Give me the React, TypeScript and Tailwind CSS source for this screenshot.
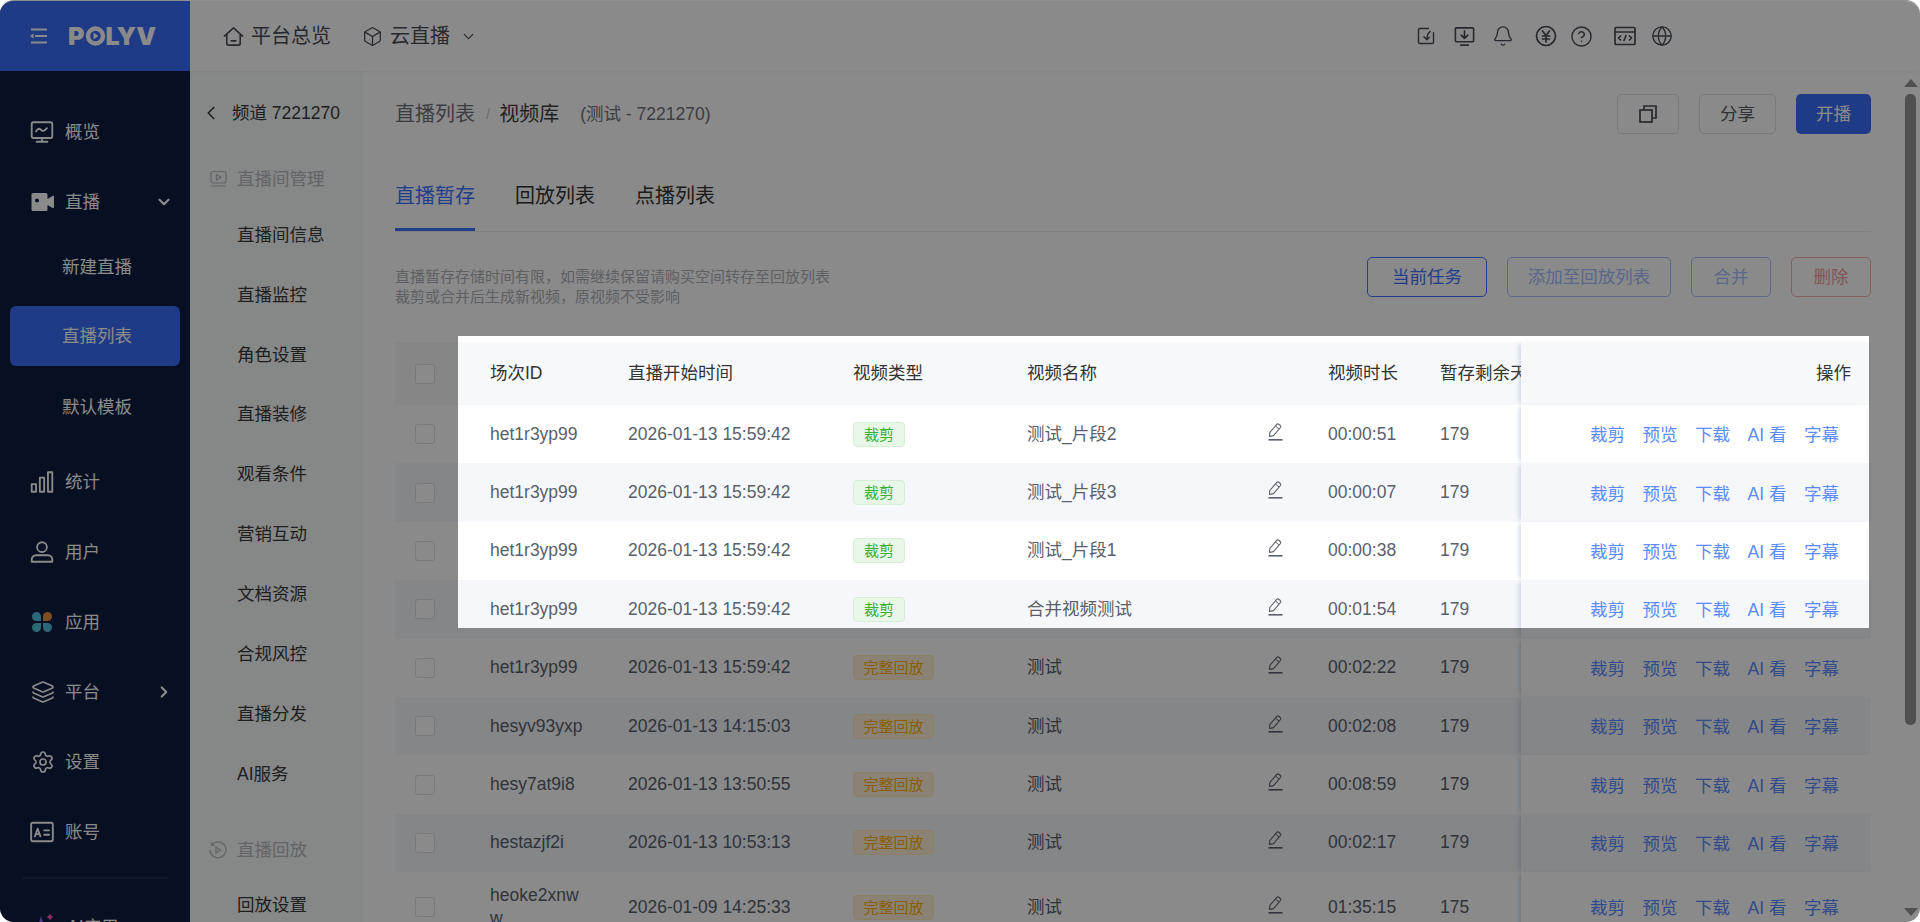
import React from "react";
import { Box, ChevronDown, ChevronLeft, ChevronRight, Bell, CircleHelp, Globe, Layers, Settings } from "lucide-react";

const I = ({ children, size = 22, className = "" }: { children: React.ReactNode; size?: number; className?: string }) => (
  <svg width={size} height={size} viewBox="0 0 24 24" fill="none" stroke="currentColor" strokeWidth="1.7" strokeLinecap="round" strokeLinejoin="round" className={className}>{children}</svg>
);

const Logo = () => (
  <div className="flex items-center text-white text-[25px] leading-none font-black tracking-[0.2px] [font-family:Inter,sans-serif]">
    <span>P</span>
    <svg width="21" height="20" viewBox="0 0 21 20"><circle cx="10.5" cy="10" r="7.5" fill="none" stroke="currentColor" strokeWidth="4.4" /><path d="M8.5 6.8 L13.6 10 L8.5 13.2Z" fill="currentColor" /></svg>
    <span>LYV</span>
  </div>
);

const iconsMain: Record<string, React.ReactNode> = {
  概览: <I size={26} className="-ml-[2px]"><rect x="2.5" y="3" width="19" height="14.5" rx="1.5" /><path d="M6.5 11.5c1.5-3 3-3 4.500-1.500s3 1.500 5.500-1.500M12 17.500v3.500M7 21h10" /></I>,
  直播: <svg width="24" height="22" viewBox="0 0 24 22"><path fillRule="evenodd" fill="currentColor" d="M2 2h13a1.500 1.500 0 0 1 1.500 1.500v4.500l5-3c.8-.4 1.500 0 1.500 1v10c0 1-.7 1.400-1.500 1l-5-3v4.500a1.500 1.500 0 0 1-1.500 1.500H2a1.500 1.500 0 0 1-1.500-1.500v-15A1.500 1.500 0 0 1 2 2Zm4 5.500a2 2 0 1 0 0 4 2 2 0 0 0 0-4Z" /></svg>,
  统计: <I size={26} className="-ml-[2px]"><rect x="2.500" y="14" width="4" height="7" /><rect x="10" y="8" width="4" height="13" /><rect x="17.500" y="3" width="4" height="18" /></I>,
  用户: <I size={26} className="-ml-[2px]"><circle cx="12" cy="7.500" r="4.500" /><path d="M2.500 21v-2a4 4 0 0 1 4-4h11a4 4 0 0 1 4 4v2Z" /></I>,
  应用: <svg width="22" height="22" viewBox="0 0 22 22"><path fill="#4fc3d8" d="M5.500 1A4.500 4.500 0 0 1 10 5.500V10H5.500a4.500 4.500 0 0 1 0-9ZM10 12v4.500A4.500 4.500 0 1 1 5.500 12ZM12 12h4.500a4.500 4.500 0 1 1-4.500 4.500Z" /><path fill="#e8923a" d="M12 10V5.500a4.500 4.500 0 1 1 4.500 4.500Z" /></svg>,
  平台: <Layers size={24} strokeWidth={1.7} />,
  设置: <Settings size={24} strokeWidth={1.7} />,
  账号: <I size={26} className="-ml-[2px]"><rect x="2" y="3.500" width="20" height="17" rx="1.500" /><path d="M5.500 16l2.500-7 2.500 7M6.500 14h3M14 10.500h4.500M14 14.500h4.500" /></I>,
};

const NavItem = ({ label, arrow }: { label: string; arrow?: "d" | "r" }) => (
  <div className="h-[70px] flex items-center pl-[31px] pr-[17px] text-white">
    <div className="w-[34px] shrink-0 flex items-center">{iconsMain[label]}</div>
    <span className="flex-1 text-[17.5px]">{label}</span>
    {arrow === "d" && <ChevronDown size={18} strokeWidth={3} />}
    {arrow === "r" && <ChevronRight size={18} strokeWidth={3} />}
  </div>
);

const Sidebar = () => (
  <aside className="w-[190px] shrink-0 h-full bg-[#0d1c3f] flex flex-col overflow-hidden">
    <div className="h-[70px] shrink-0 bg-[#3a6ef5] flex items-center pl-[29px] text-white">
      <svg width="18" height="16" viewBox="0 0 18 16" className="mr-[21px]" fill="none" stroke="currentColor" strokeWidth="1.800"><path d="M2 1.500h16M6 8h12M2 14.500h16" /><path d="M4.500 5.500 L1 8 L4.500 10.500Z" fill="currentColor" stroke="none" /></svg>
      <Logo />
    </div>
    <div className="pt-[26px]">
      <NavItem label="概览" />
      <NavItem label="直播" arrow="d" />
      <div className="-mt-[5px] mb-[5px] text-white text-[17.5px]">
        <div className="h-[70px] flex items-center pl-[62px]">新建直播</div>
        <div className="h-[70px] flex items-center mx-[10px]"><div className="w-full h-[60px] -mt-[2px] rounded-[6px] bg-[#3a6ef5] flex items-center pl-[52px]">直播列表</div></div>
        <div className="h-[70px] flex items-center pl-[62px]">默认模板</div>
      </div>
      <NavItem label="统计" />
      <NavItem label="用户" />
      <NavItem label="应用" />
      <NavItem label="平台" arrow="r" />
      <NavItem label="设置" />
      <NavItem label="账号" />
      <div className="mx-[22px] mt-[10px] h-[2px] bg-[#1e2b4d]" />
      <div className="mt-[13px] h-[70px] flex items-center pl-[37px] text-white text-[17.5px]">
        <svg width="20" height="20" viewBox="0 0 20 20" className="mr-[10px] overflow-visible"><path d="M4 -1 L10 20 L-2 20Z" fill="#9a6bff" /><path d="M13 -3.500 L14.200 -1.200 L16.500 0 L14.200 1.200 L13 3.500 L11.800 1.200 L9.500 0 L11.800 -1.200Z" fill="#ff5fc0" /></svg>
        AI应用
      </div>
    </div>
  </aside>
);

const subItems = ["直播间信息", "直播监控", "角色设置", "直播装修", "观看条件", "营销互动", "文档资源", "合规风控", "直播分发", "AI服务"];

const SubSidebar = () => (
  <aside className="w-[173px] shrink-0 bg-[#f8f9fa] text-[17.5px] text-[#3a3a3a] overflow-hidden">
    <div className="h-[60px] mt-[12px] flex items-center pl-[10px]">
      <ChevronLeft size={22} strokeWidth={1.800} className="mr-[10px]" />
      <span className="whitespace-nowrap">频道 7221270</span>
    </div>
    <div className="h-[50px] mt-[11px] flex items-center pl-[20px] text-[#b8babf]">
      <svg width="17" height="18" viewBox="0 0 17 18" fill="none" stroke="currentColor" strokeWidth="1.200" className="mr-[10px]"><rect x="1" y="1.500" width="15" height="11.500" rx="2" /><path d="M6.500 4.500 L11 7.200 L6.500 10Z" /><path d="M1 16h15" /></svg>
      直播间管理
    </div>
    <div className="mt-px">
      {subItems.map((s) => <div key={s} className="h-[59.900px] flex items-center pl-[47px]">{s}</div>)}
    </div>
    <div className="h-[50px] mt-[21px] flex items-center pl-[19px] text-[#b8babf]">
      <svg width="18" height="18" viewBox="0 0 18 18" fill="none" stroke="currentColor" strokeWidth="1.300" className="mr-[10px]"><path d="M3 3.500A8 8 0 1 1 1 9M2.500 1v3h3" /><path d="M7 6 L11.500 9 L7 12Z" /></svg>
      直播回放
    </div>
    <div className="h-[60px] flex items-center pl-[47px]">回放设置</div>
  </aside>
);

const TopBar = () => (
  <header className="h-[70px] shrink-0 bg-white flex items-center text-[#4a4d55] shadow-[0_1px_3px_rgba(0,0,0,0.04)] relative z-10">
    <div className="flex items-center text-[20px] pl-[32px]">
      <I size={23} className="mr-[6px]"><path d="M2.500 11.500 12 3l9.500 8.500M5 9.500V19a2 2 0 0 0 2 2h10a2 2 0 0 0 2-2V9.500M9.500 16.500h5" /></I>
      <span>平台总览</span>
      <Box size={21} strokeWidth={1.500} className="ml-[31px] mr-[7px]" />
      <span>云直播</span>
      <ChevronDown size={17} strokeWidth={1.700} className="ml-[10px]" />
    </div>
    <div className="ml-[939px] flex items-center">
      <I size={20}><path d="M15 3H4.500A1.500 1.500 0 0 0 3 4.500v15A1.500 1.500 0 0 0 4.500 21h15a1.500 1.500 0 0 0 1.500-1.500V8" /><path d="M17 6.500l-3 3.500-1 6M9.500 13l3.500 3.500 3-3" /></I>
      <I size={23} className="ml-[17px]"><rect x="2.500" y="3" width="19" height="14.500" rx="1" /><path d="M12 6v8M8.500 10.500 12 14l3.500-3.500M8 21h8" /></I>
      <Bell size={22} strokeWidth={1.500} className="ml-[16px]" />
      <I size={24} className="ml-[20px]"><circle cx="12" cy="12" r="9.500" /><path d="M8.500 7 12 11.500 15.500 7M8.500 12h7M8.500 15h7M12 11.500V18" /></I>
      <CircleHelp size={23} strokeWidth={1.500} className="ml-[12px]" />
      <I size={24} className="ml-[20px]"><rect x="2" y="3.500" width="20" height="17" rx="1" /><path d="M2 8h20M7.500 12l-2 2 2 2M16.500 12l2 2-2 2M13 11.500l-2 5" /></I>
      <Globe size={22} strokeWidth={1.500} className="ml-[14px]" />
    </div>
  </header>
);

type Row = { id: string; time: string; clip: boolean; name: string; dur: string; left: string };
const rows: Row[] = [
  { id: "het1r3yp99", time: "2026-01-13 15:59:42", clip: true, name: "测试_片段2", dur: "00:00:51", left: "179" },
  { id: "het1r3yp99", time: "2026-01-13 15:59:42", clip: true, name: "测试_片段3", dur: "00:00:07", left: "179" },
  { id: "het1r3yp99", time: "2026-01-13 15:59:42", clip: true, name: "测试_片段1", dur: "00:00:38", left: "179" },
  { id: "het1r3yp99", time: "2026-01-13 15:59:42", clip: true, name: "合并视频测试", dur: "00:01:54", left: "179" },
  { id: "het1r3yp99", time: "2026-01-13 15:59:42", clip: false, name: "测试", dur: "00:02:22", left: "179" },
  { id: "hesyv93yxp", time: "2026-01-13 14:15:03", clip: false, name: "测试", dur: "00:02:08", left: "179" },
  { id: "hesy7at9i8", time: "2026-01-13 13:50:55", clip: false, name: "测试", dur: "00:08:59", left: "179" },
  { id: "hestazjf2i", time: "2026-01-13 10:53:13", clip: false, name: "测试", dur: "00:02:17", left: "179" },
  { id: "heoke2xnww", time: "2026-01-09 14:25:33", clip: false, name: "测试", dur: "01:35:15", left: "175" },
];

const grid = "grid grid-cols-[75px_138px_225px_174px_301px_112px_101px_350px]";
const cell = "flex items-center px-5 overflow-hidden";
const fixedShadow = "relative shadow-[-4px_0_4px_-2px_rgba(130,155,190,0.35)]";

const Checkbox = () => <div className="ml-5 w-5 h-5 rounded-[3px] border border-[#dcdfe6] bg-white shrink-0" />;

const EditIcon = () => (
  <svg width="15" height="18" viewBox="0 0 15 18" fill="none" stroke="currentColor" className="-mt-[5px]">
    <path d="M1.500 13.500 L1.800 9.500 L8.800 1.300 Q9.800 0.500 10.800 1.300 L12.300 2.500 Q13.200 3.500 12.500 4.500 L5.500 12.600 Z" strokeWidth="1.100" strokeLinejoin="round" />
    <path d="M7.500 3 L11 6" strokeWidth="1" />
    <path d="M0.500 16.800 H14.500" strokeWidth="1.600" />
  </svg>
);

const Table = () => (
  <div className="mt-[35px] text-[17.5px] leading-[23px]">
    <div className={`${grid} h-[63px] bg-[#f7f8fa] text-[#333333]`}>
      <div className="flex items-center"><Checkbox /></div>
      <div className={cell}>场次ID</div>
      <div className={cell}>直播开始时间</div>
      <div className={cell}>视频类型</div>
      <div className={cell}>视频名称</div>
      <div className={cell}>视频时长</div>
      <div className="flex items-center pl-5 overflow-hidden whitespace-nowrap">暂存剩余天数</div>
      <div className={`flex items-center justify-end pr-5 bg-[#f7f8fa] ${fixedShadow}`}>操作</div>
    </div>
    {rows.map((r, i) => {
      const bg = i % 2 ? "bg-[#f6f7fb]" : "bg-white";
      return (
        <div key={i} className={`${grid} min-h-[58.400px] text-[#5a5f6b] ${bg}`}>
          <div className="flex items-center"><Checkbox /></div>
          <div className={`${cell} py-3 break-all`}><span className="min-w-0">{r.id}</span></div>
          <div className={cell}>{r.time}</div>
          <div className={cell}>
            {r.clip
              ? <span className="inline-flex items-center justify-center h-[25px] w-[52px] rounded-[4px] border border-[#d5eed5] bg-[#e9f7e9] text-[#38b038] text-[15px]">裁剪</span>
              : <span className="inline-flex items-center justify-center h-[25px] w-[81px] rounded-[4px] border border-[#ffecc0] bg-[#fff3d9] text-[#ffad00] text-[15px]">完整回放</span>}
          </div>
          <div className="flex items-center justify-between pl-5 pr-[25px]">
            <span>{r.name}</span>
            <EditIcon />
          </div>
          <div className={cell}>{r.dur}</div>
          <div className={cell}>{r.left}</div>
          <div className={`flex items-center justify-end gap-[17.500px] pr-8 pt-[3px] text-[#5b8cff] whitespace-nowrap ${bg} ${fixedShadow}`}>
            <span>裁剪</span><span>预览</span><span>下载</span><span>AI 看</span><span>字幕</span>
          </div>
        </div>
      );
    })}
  </div>
);

const Main = () => (
  <main className="flex-1 min-w-0 overflow-hidden pl-[32px] pr-[32px] pt-[23px] bg-white">
    <div className="flex items-center h-[40px]">
      <span className="text-[20px] text-[#6f7177]">直播列表</span>
      <span className="ml-[11px] mr-[9px] text-[15px] text-[#c8c8c8]">/</span>
      <span className="text-[20px] text-[#3f3f3f]">视频库</span>
      <span className="ml-[21px] text-[17.5px] text-[#6f7177]">(测试 - 7221270)</span>
      <div className="ml-auto flex gap-[20px] text-[17.5px]">
        <div className="w-[62px] h-[40px] rounded-[5px] border border-[#dcdfe3] flex items-center justify-center text-[#4a4d55]">
          <svg width="18" height="18" viewBox="0 0 18 18" fill="none" stroke="currentColor" strokeWidth="1.700"><rect x="1" y="5" width="12" height="12" /><path d="M5 5V1h12v12h-4" /></svg>
        </div>
        <div className="w-[77px] h-[40px] rounded-[5px] border border-[#dcdfe3] flex items-center justify-center text-[#5a5d65]">分享</div>
        <div className="w-[75px] h-[40px] rounded-[5px] bg-[#3a6ef5] flex items-center justify-center text-white">开播</div>
      </div>
    </div>
    <div className="mt-[38px] flex gap-[40px] border-b border-[#eceef1] text-[20px] leading-[26px] text-[#333333]">
      <div className="h-[59px] pt-[11px] border-b-[3px] border-[#3e74ff] text-[#3e74ff] -mb-px">直播暂存</div>
      <div className="h-[59px] pt-[11px]">回放列表</div>
      <div className="h-[59px] pt-[11px]">点播列表</div>
    </div>
    <div className="mt-[25px] flex items-start">
      <div className="mt-[10px] text-[15px] leading-[20px] text-[#b0b2b8]">
        <div>直播暂存存储时间有限，如需继续保留请购买空间转存至回放列表</div>
        <div>裁剪或合并后生成新视频，原视频不受影响</div>
      </div>
      <div className="ml-auto flex gap-[20px] text-[17.5px]">
        <div className="w-[120px] h-[40px] rounded-[5px] border border-[#3e74ff] text-[#3e74ff] flex items-center justify-center">当前任务</div>
        <div className="w-[164px] h-[40px] rounded-[5px] border border-[#a8c0ff] text-[#a8c0ff] flex items-center justify-center">添加至回放列表</div>
        <div className="w-[80px] h-[40px] rounded-[5px] border border-[#a8c0ff] text-[#a8c0ff] flex items-center justify-center">合并</div>
        <div className="w-[80px] h-[40px] rounded-[5px] border border-[#f5b0b0] text-[#f5a0a0] flex items-center justify-center">删除</div>
      </div>
    </div>
    <Table />
  </main>
);

const Scrollbar = () => (
  <div className="w-[17px] shrink-0 bg-white flex flex-col pl-px relative">
    <svg width="14" height="8" viewBox="0 0 14 8" className="mt-[8px] shrink-0"><path d="M7 0 L14 8 L0 8Z" fill="#959595" /></svg>
    <div className="mt-[7px] ml-[1px] w-[11px] h-[631px] rounded-[5px] bg-[#959595]" />
    <svg width="14" height="8" viewBox="0 0 14 8" className="mt-auto mb-[6px] shrink-0"><path d="M7 8 L14 0 L0 0Z" fill="#959595" /></svg>
  </div>
);

export default function App() {
  return (
    <div className="w-[1920px] h-[922px] bg-white overflow-hidden [font-family:'Liberation_Sans','Noto_Sans_CJK_SC',sans-serif]">
      <div className="relative w-full h-full rounded-[14px] overflow-hidden border-t border-[#8f8f8f] flex bg-white">
        <Sidebar />
        <div className="flex-1 min-w-0 flex flex-col h-full">
          <TopBar />
          <div className="flex-1 min-h-0 flex">
            <SubSidebar />
            <Main />
            <Scrollbar />
          </div>
        </div>
        <div className="absolute left-[458px] top-[335px] w-[1411px] h-[292px] z-50 shadow-[0_0_0_2400px_rgba(0,0,0,0.46)]" />
      </div>
    </div>
  );
}
